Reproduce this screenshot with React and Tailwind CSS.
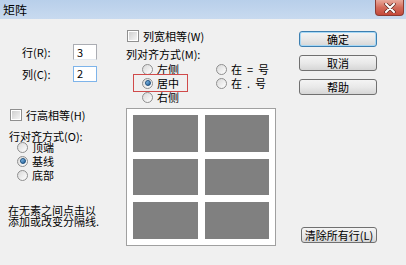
import React from 'react';

const font = { fontFamily: '"Noto Sans CJK SC", "Liberation Sans", sans-serif' };

function Radio({ checked }) {
  return (
    <span className="relative flex h-[11px] w-[11px] shrink-0 items-center justify-center rounded-full border border-[#8f8f8f] bg-gradient-to-br from-[#d9d9d9] to-[#ffffff]">
      {checked && (
        <span className="h-[6px] w-[6px] rounded-full border border-[#1c4f7e] bg-gradient-to-br from-[#8fc7f2] to-[#1f5d95]" />
      )}
    </span>
  );
}

function Check() {
  return (
    <span className="flex h-[12px] w-[12px] shrink-0 items-center justify-center border border-[#8f8f8f] bg-white">
      <span className="h-[8px] w-[8px] bg-gradient-to-br from-[#cfcfcf] to-[#f4f4f4]" />
    </span>
  );
}

function RadioRow({ label, checked }) {
  return (
    <div className="flex h-[14px] items-center gap-[4px]">
      <Radio checked={checked} />
      <span className="whitespace-pre leading-[11px]">{label}</span>
    </div>
  );
}

function Button({ children, primary, className = '' }) {
  return (
    <button
      className={
        'flex h-[16px] items-center justify-center rounded-[3px] border bg-gradient-to-b from-[#f4f4f4] via-[#e9e9e9] to-[#d6d6d6] text-[11px] leading-none text-black ' +
        (primary ? 'border-[#3c7fb1] shadow-[inset_0_0_0_1px_#a7d8f5] ' : 'border-[#707070] ') +
        className
      }
    >
      {children}
    </button>
  );
}

function Input({ value, focused }) {
  return (
    <div
      className={
        'flex h-[16px] w-[24px] items-center bg-white pl-[3px] text-[11px] leading-none border ' +
        (focused ? 'border-[#7eb4ea]' : 'border-[#abadb3] border-b-[#e3e9ef]')
      }
    >
      {value}
    </div>
  );
}

export default function App() {
  return (
    <div className="h-[265px] w-[406px] overflow-hidden bg-[#f0f0f0] text-[11px] text-black" style={font}>
      <div className="flex h-[19px] items-start justify-between bg-gradient-to-b from-[#b8cfea] to-[#c8daef]">
        <span className="pl-[3px] pt-[1px] text-[12px] leading-[17px]">矩阵</span>
        <div className="mr-[2px] flex h-[16px] w-[29px] items-center justify-center rounded-b-[4px] border border-t-0 border-[#8b3b32] bg-gradient-to-b from-[#e9a99c] via-[#d36b5b] to-[#c4493a]">
          <svg width="12" height="10" viewBox="0 0 12 10">
            <path d="M2 1 L10 9 M10 1 L2 9" stroke="#5a2a24" strokeWidth="3.4" strokeLinecap="round" />
            <path d="M2 1 L10 9 M10 1 L2 9" stroke="#ffffff" strokeWidth="2" strokeLinecap="round" />
          </svg>
        </div>
      </div>

      <div className="flex h-[246px]">
        <div className="flex w-[118px] shrink-0 flex-col">
          <div className="flex flex-col gap-[5px] pl-[22px] pt-[25px]">
            <div className="flex items-center">
              <span className="w-[51px]">行(R):</span>
              <Input value="3" />
            </div>
            <div className="flex items-center">
              <span className="w-[51px]">列(C):</span>
              <Input value="2" focused />
            </div>
          </div>
          <div className="mt-[26px] flex h-[13px] items-center gap-[4px] pl-[10px]">
            <Check />
            <span className="leading-[12px]">行高相等(H)</span>
          </div>
          <div className="mt-[9px] pl-[9px] leading-[12px]">行对齐方式(O):</div>
          <div className="mt-[-2px] flex flex-col pl-[17px]">
            <RadioRow label="顶端" />
            <RadioRow label="基线" checked />
            <RadioRow label="底部" />
          </div>
          <div className="mt-[23px] pl-[8px] leading-[11px]">
            在无素之间点击以
            <br />
            添加或改变分隔线.
          </div>
        </div>

        <div className="flex w-[162px] shrink-0 flex-col">
          <div className="mt-[11px] flex h-[12px] items-center gap-[4px] pl-[9px]">
            <Check />
            <span className="leading-[12px]">列宽相等(W)</span>
          </div>
          <div className="mt-[6px] pl-[8px] leading-[12px]">列对齐方式(M):</div>
          <div className="mt-[2px] flex pl-[24px]">
            <div className="flex w-[74px] flex-col">
              <RadioRow label="左侧" />
              <div className="relative">
                <RadioRow label="居中" checked />
                <span className="absolute left-[-9px] top-[-2px] h-[18px] w-[55px] border border-[#d04a4a]" />
              </div>
              <RadioRow label="右侧" />
            </div>
            <div className="flex flex-col">
              <RadioRow label="在  =  号" />
              <RadioRow label="在  .  号" />
            </div>
          </div>
          <div className="ml-[8px] mt-[4px] grid h-[138px] w-[150px] grid-cols-2 grid-rows-3 gap-[7px] border border-[#a0a0a0] bg-white p-[6px]">
            <div className="bg-[#808080]" />
            <div className="bg-[#808080]" />
            <div className="bg-[#808080]" />
            <div className="bg-[#808080]" />
            <div className="bg-[#808080]" />
            <div className="bg-[#808080]" />
          </div>
        </div>

        <div className="flex flex-1 flex-col">
          <div className="flex flex-col gap-[8px] pl-[19px] pt-[12px]">
            <Button primary className="w-[78px]">确定</Button>
            <Button className="w-[78px]">取消</Button>
            <Button className="w-[78px]">帮助</Button>
          </div>
          <div className="mt-[132px] pl-[21px]">
            <Button className="w-[76px]">清除所有行(L)</Button>
          </div>
        </div>
      </div>
    </div>
  );
}
